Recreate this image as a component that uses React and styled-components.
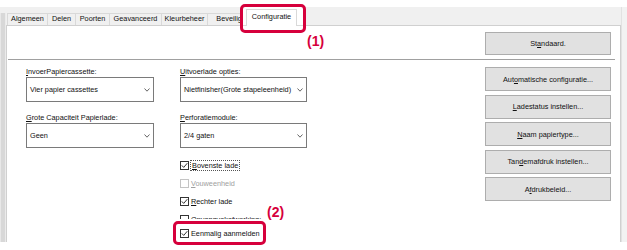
import React from 'react';
import styled, { createGlobalStyle } from 'styled-components';

const RED = '#d6003c';

const GlobalStyle = createGlobalStyle`
  *, *::before, *::after { box-sizing: border-box; }
  html, body { margin: 0; padding: 0; background: #fff; }
  body {
    font-family: "Liberation Sans", Arial, sans-serif;
    font-size: 7.3px;
    color: #111;
  }
  u { text-decoration-thickness: 1px; text-underline-offset: 1px; }
`;

const Page = styled.div`
  position: relative;
  width: 627px;
  height: 250px;
  padding-top: 7px;
  overflow: hidden;
`;

const Window = styled.div`
  display: grid;
  grid-template-columns: 6px 1fr 6px;
  height: 235px;
  background: #f0f0f0;
`;

const LeftEdge = styled.div`
  margin-top: 6px;
  background: #d8d8d8;
  border-left: 1px solid #e8e8e8;
  border-right: 1px solid #ebebeb;
`;

const RightEdge = styled.div`
  background: #f2f2f2;
  border-left: 1px solid #e2e2e2;
`;

const Center = styled.div`
  display: flex;
  flex-direction: column;
`;

const TabRow = styled.div`
  display: flex;
  align-items: flex-end;
  height: 18px;
  padding-left: 1px;
`;

const Tab = styled.div`
  width: ${(p) => p.$w}px;
  height: 12px;
  margin-left: -1px;
  border: 1px solid #d9d9d9;
  border-bottom: none;
  background: #f0f0f0;
  line-height: 10px;
  text-align: center;
  white-space: nowrap;
  overflow: hidden;
  &:first-child { margin-left: 0; }
`;

const Panel = styled.div`
  flex: 1;
  background: #fff;
  border: 1px solid #d0d0d0;
  border-bottom: none;
`;

const TopBar = styled.div`
  display: flex;
  justify-content: flex-end;
  padding: 6px 9px 0 0;
`;

const Separator = styled.div`
  height: 1px;
  margin: 4px 5px 0 1px;
  background: #a0a0a0;
`;

const Body = styled.div`
  display: flex;
  padding: 7px 9px 0 19px;
`;

const FormColumn = styled.div`
  display: flex;
  flex-direction: column;
  gap: 11px;
  width: ${(p) => p.$w}px;
  margin-right: ${(p) => p.$gap || 0}px;
`;

const Field = styled.div`
  display: flex;
  flex-direction: column;
`;

const FieldLabel = styled.div`
  height: 10px;
  line-height: 10px;
  white-space: nowrap;
`;

const SelectBox = styled.div`
  display: flex;
  align-items: center;
  justify-content: space-between;
  height: 25px;
  padding: 0 3px 0 3px;
  border: 1px solid #7a7a7a;
  background: #fff;
  white-space: nowrap;
`;

const ButtonColumn = styled.div`
  display: flex;
  flex-direction: column;
  gap: 3.5px;
  width: 126px;
  margin-left: auto;
`;

const Button = styled.div`
  display: flex;
  align-items: center;
  justify-content: center;
  width: 126px;
  height: ${(p) => p.$h || 24}px;
  border: 1px solid #adadad;
  background: #e1e1e1;
  white-space: nowrap;
`;

const CheckList = styled.div`
  display: flex;
  flex-direction: column;
  margin-top: -3px;
`;

const CheckRow = styled.div`
  display: flex;
  align-items: center;
  gap: 2px;
  height: 18px;
  color: ${(p) => (p.$disabled ? '#a0a0a0' : '#111')};
  white-space: nowrap;
`;

const Box = styled.span`
  display: inline-flex;
  width: 9px;
  height: 9px;
  flex: none;
  border: 1px solid ${(p) => (p.$disabled ? '#c4c4c4' : '#333')};
  background: #fff;
`;

const FocusText = styled.span`
  line-height: 9px;
  padding: 0 1px;
  outline: 1px dotted #555;
  outline-offset: 0;
`;

const TabCallout = styled.div`
  position: absolute;
  left: 240px;
  top: 4px;
  width: 66px;
  height: 29px;
  border: 3px solid ${RED};
  border-radius: 5px;
  background: #fff;
  overflow: hidden;
`;

const CalloutStrip = styled.div`
  height: 19px;
  padding: 2px 0 0 3px;
  border-bottom: 1px solid #d9d9d9;
`;

const SelectedTab = styled.div`
  position: relative;
  width: 51px;
  height: 17px;
  padding-top: 1px;
  border: 1px solid #d9d9d9;
  border-bottom: none;
  background: #fff;
  line-height: 12px;
  text-align: center;
`;

const CheckCallout = styled.div`
  position: absolute;
  left: 173px;
  top: 221px;
  width: 93px;
  height: 24px;
  display: flex;
  align-items: center;
  gap: 2px;
  padding-left: 4px;
  border: 3px solid ${RED};
  border-radius: 5px;
  background: #fff;
  box-shadow: 0 0 0 2px #fff;
  white-space: nowrap;
`;

const CalloutNumber = styled.span`
  position: absolute;
  left: ${(p) => p.$x}px;
  top: ${(p) => p.$y}px;
  font-size: 14px;
  line-height: 16px;
  font-weight: bold;
  color: ${RED};
`;

const Chevron = () => (
  <svg width="6" height="4" viewBox="0 0 6 4">
    <polyline points="0.5,0.5 3,3.2 5.5,0.5" fill="none" stroke="#555" strokeWidth="0.9" />
  </svg>
);

const CheckBox = ({ checked, disabled }) => (
  <Box $disabled={disabled}>
    {checked && (
      <svg width="7" height="7" viewBox="0 0 7 7">
        <polyline points="0.8,3.4 2.7,5.4 6.3,1.2" fill="none" stroke="#333" strokeWidth="1" />
      </svg>
    )}
  </Box>
);

const tabs = [
  ['Algemeen', 41],
  ['Delen', 29],
  ['Poorten', 35],
  ['Geavanceerd', 53],
  ['Kleurbeheer', 47],
  ['Beveiliging', 54],
];

const Select = ({ children }) => (
  <SelectBox>
    <span>{children}</span>
    <Chevron />
  </SelectBox>
);

export default function App() {
  return (
    <>
      <GlobalStyle />
      <Page>
        <Window>
          <LeftEdge />
          <Center>
            <TabRow>
              {tabs.map(([name, w]) => (
                <Tab key={name} $w={w}>{name}</Tab>
              ))}
            </TabRow>
            <Panel>
              <TopBar>
                <Button $h={23}>St<u>a</u>ndaard.</Button>
              </TopBar>
              <Separator />
              <Body>
                <FormColumn $w={128} $gap={26}>
                  <Field>
                    <FieldLabel><u>I</u>nvoerPapiercassette:</FieldLabel>
                    <Select>Vier papier cassettes</Select>
                  </Field>
                  <Field>
                    <FieldLabel><u>G</u>rote Capaciteit Papierlade:</FieldLabel>
                    <Select>Geen</Select>
                  </Field>
                </FormColumn>
                <FormColumn $w={127}>
                  <Field>
                    <FieldLabel><u>U</u>itvoerlade opties:</FieldLabel>
                    <Select>Nietfinisher(Grote stapeleenheid)</Select>
                  </Field>
                  <Field>
                    <FieldLabel><u>P</u>erforatiemodule:</FieldLabel>
                    <Select>2/4 gaten</Select>
                  </Field>
                  <CheckList>
                    <CheckRow>
                      <CheckBox checked />
                      <FocusText><u>B</u>ovenste lade</FocusText>
                    </CheckRow>
                    <CheckRow $disabled>
                      <CheckBox disabled />
                      <span><u>V</u>ouweenheid</span>
                    </CheckRow>
                    <CheckRow>
                      <CheckBox checked />
                      <span><u>R</u>echter lade</span>
                    </CheckRow>
                    <CheckRow>
                      <CheckBox />
                      <span>Opvangvakafwerking:</span>
                    </CheckRow>
                  </CheckList>
                </FormColumn>
                <ButtonColumn>
                  <Button>Aut<u>o</u>matische configuratie...</Button>
                  <Button><u>L</u>adestatus instellen...</Button>
                  <Button><u>N</u>aam papiertype...</Button>
                  <Button>Tan<u>d</u>emafdruk instellen...</Button>
                  <Button>A<u>f</u>drukbeleid...</Button>
                </ButtonColumn>
              </Body>
            </Panel>
          </Center>
          <RightEdge />
        </Window>

        <TabCallout>
          <CalloutStrip>
            <SelectedTab>Configuratie</SelectedTab>
          </CalloutStrip>
        </TabCallout>
        <CalloutNumber $x={307} $y={33}>(1)</CalloutNumber>

        <CheckCallout>
          <CheckBox checked />
          <span>Eenmalig aanmelden</span>
        </CheckCallout>
        <CalloutNumber $x={267} $y={204}>(2)</CalloutNumber>
      </Page>
    </>
  );
}
